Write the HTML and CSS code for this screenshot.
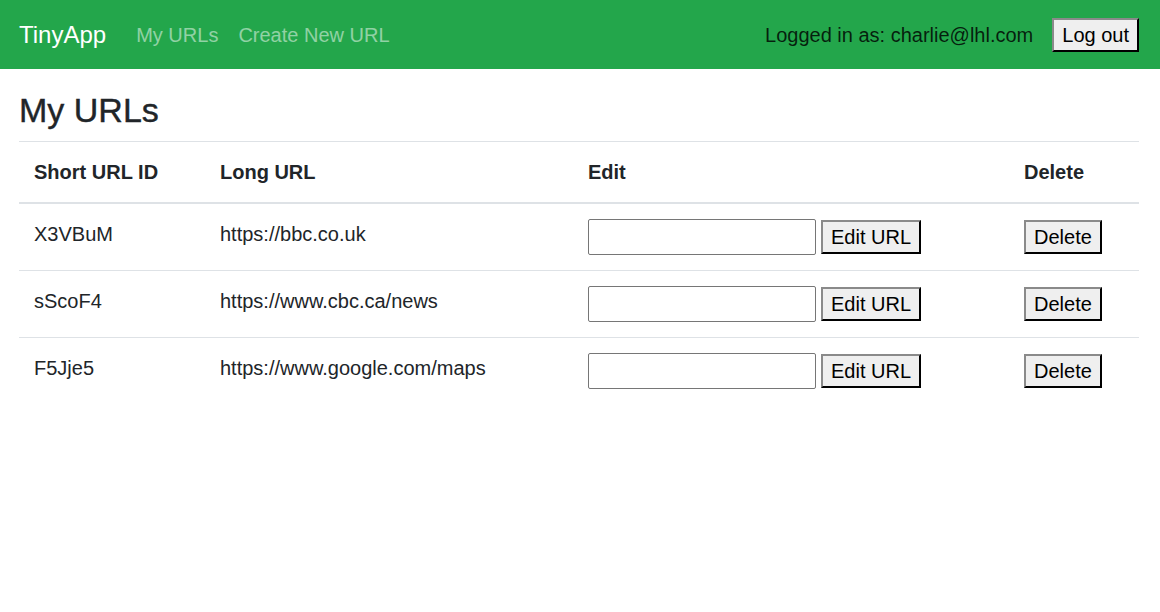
FILE: index.html
```html
<!DOCTYPE html>
<html lang="en">
<head>
<meta charset="utf-8">
<title>TinyApp</title>
<link rel="stylesheet" href="styles.css">
</head>
<body>
<nav class="navbar">
  <a class="brand" href="#">TinyApp</a>
  <div class="nav-links">
    <a class="nav-link" href="#">My URLs</a>
    <a class="nav-link" href="#">Create New URL</a>
  </div>
  <div class="nav-right">
    <span class="nav-text">Logged in as: charlie@lhl.com</span>
    <form class="logout-form"><button class="btn" type="button">Log out</button></form>
  </div>
</nav>
<main class="main">
  <h3 class="title">My URLs</h3>
  <table class="table">
    <colgroup>
      <col class="c1"><col class="c2"><col class="c3"><col class="c4">
    </colgroup>
    <thead>
      <tr><th>Short URL ID</th><th>Long URL</th><th>Edit</th><th>Delete</th></tr>
    </thead>
    <tbody>
      <tr>
        <td>X3VBuM</td><td>https://bbc.co.uk</td>
        <td><form class="edit-form"><input class="url-input" type="text"> <button class="btn" type="button">Edit URL</button></form></td>
        <td><form class="del-form"><button class="btn" type="button">Delete</button></form></td>
      </tr>
      <tr>
        <td>sScoF4</td><td>https://www.cbc.ca/news</td>
        <td><form class="edit-form"><input class="url-input" type="text"> <button class="btn" type="button">Edit URL</button></form></td>
        <td><form class="del-form"><button class="btn" type="button">Delete</button></form></td>
      </tr>
      <tr>
        <td>F5Jje5</td><td>https://www.google.com/maps</td>
        <td><form class="edit-form"><input class="url-input" type="text"> <button class="btn" type="button">Edit URL</button></form></td>
        <td><form class="del-form"><button class="btn" type="button">Delete</button></form></td>
      </tr>
    </tbody>
  </table>
</main>
</body>
</html>
```

FILE: styles.css
```css
* { box-sizing: border-box; }
html, body { margin: 0; padding: 0; }
body {
  font-family: "Liberation Sans", Arial, sans-serif;
  font-size: 20px;
  line-height: 1.5;
  color: #212529;
  background: #fff;
}
.navbar {
  display: flex;
  align-items: center;
  height: 69px;
  padding: 0 20px 0 19px;
  background: #23a64b;
}
.brand {
  color: #fff;
  font-size: 24px;
  text-decoration: none;
  margin-right: 20px;
}
.nav-links { display: flex; }
.nav-link {
  color: rgba(255,255,255,0.5);
  text-decoration: none;
  padding: 0 10px;
}
.nav-right {
  margin-left: auto;
  display: flex;
  align-items: center;
  gap: 19px;
  margin-right: 1px;
}
.nav-text { color: rgba(0,0,0,0.82); }
.logout-form { margin: 0; }
.btn {
  font-family: inherit;
  font-size: 20px;
  line-height: 26px;
  color: #000;
  background: #efefef;
  border: 2px outset #767676;
  border-color: #8a8a8a #3a3a3a #3a3a3a #8a8a8a;
  padding: 2px 8px;
  margin: 0;
}
.main { padding: 20px 21px 0 19px; }
.title {
  margin: 0 0 10px;
  font-size: 34px;
  font-weight: 400;
  line-height: 42px;
  -webkit-text-stroke: 0.4px #212529;
}
.table {
  width: 100%;
  border-collapse: collapse;
  table-layout: fixed;
}
.c1 { width: 186px; }
.c2 { width: 368px; }
.c3 { width: 436px; }
.c4 { width: 130px; }
.table th, .table td {
  padding: 15px;
  text-align: left;
  vertical-align: top;
  border-top: 1px solid #dee2e6;
}
.table th { font-weight: 700; }
.table thead th { border-bottom: 2px solid #dee2e6; }
.table form { margin: 0; }
.edit-form { display: flex; align-items: flex-start; gap: 5px; }
.edit-form .btn { margin-top: 1px; }
.del-form { padding-top: 1px; }
.url-input {
  width: 228px;
  height: 36px;
  border: 1px solid #767676;
  border-radius: 2px;
  font-size: 20px;
  padding: 1px 4px;
  margin: 0;
}
```
